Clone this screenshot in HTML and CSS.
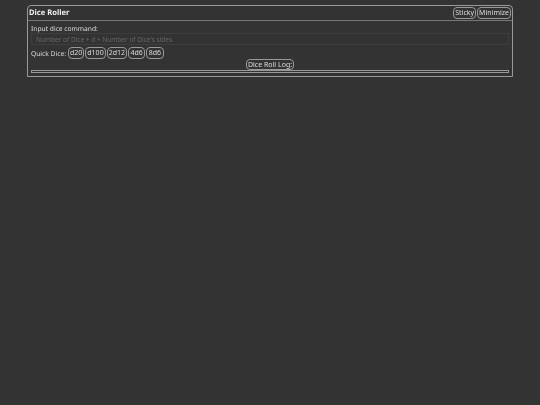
FILE: index.html
```html
<!DOCTYPE html>
<html lang="en">
<head>
    <meta charset="UTF-8">
    <meta name="viewport" content="width=device-width, initial-scale=1.0">
    <title>Dice Roller</title>
    <link rel="stylesheet" href="styles.css">
</head>
<body>
    <div class="panel">
        <div class="panel-head">
            <span class="panel-title">Dice Roller</span>
            <div class="head-btns">
                <button type="button" class="btn">Sticky</button>
                <button type="button" class="btn">Minimize</button>
            </div>
        </div>
        <div class="panel-body">
            <label class="cmd-label" for="cmd">Input dice command:</label>
            <input type="text" class="cmd-input" id="cmd" placeholder="Number of Dice + d + Number of Dice's sides">
            <div class="quick">
                <span>Quick Dice:</span>
                <button type="button" class="btn">d20</button>
                <button type="button" class="btn">d100</button>
                <button type="button" class="btn">2d12</button>
                <button type="button" class="btn btn-wide">4d6</button>
                <button type="button" class="btn btn-wide">8d6</button>
            </div>
            <div class="log-row">
                <button type="button" class="btn btn-log">Dice Roll Log:</button>
            </div>
            <div class="log"></div>
        </div>
    </div>
</body>
</html>
```

FILE: styles.css
```css
body {
    margin: 0;
    background-color: #333;
    color: #ddd;
    font-family: "Noto Sans", sans-serif;
    font-size: 6.7px;
    text-rendering: geometricPrecision;
}
.panel {
    width: 484px;
    margin: 5px 0 0 27px;
    border: 1px solid #999;
    border-top-left-radius: 4px;
    border-top-right-radius: 4px;
    will-change: opacity;
}
.panel-head {
    display: flex;
    justify-content: space-between;
    align-items: center;
    height: 14px;
    padding: 0 1px;
    border-bottom: 1px solid #777;
}
.panel-title {
    font-size: 7.6px;
    font-weight: bold;
    color: #eee;
}
.head-btns {
    display: flex;
    gap: 1px;
}
.btn {
    height: 12px;
    padding: 0 1px;
    background-color: #333;
    border: 1px solid #999;
    border-radius: 4px;
    color: #ddd;
    font-family: inherit;
    font-size: 7px;
    line-height: 10px;
}
.btn-wide {
    padding: 0 1.5px;
}
.btn-log {
    height: 11px;
}
.panel-body {
    padding: 2px 3px 3px;
}
.cmd-label {
    display: block;
    height: 9px;
    padding-top: 1px;
    line-height: 10px;
}
.cmd-input {
    display: block;
    box-sizing: border-box;
    width: 100%;
    height: 12px;
    padding: 0 4px;
    background-color: #333;
    border: 1px solid #3e3e3e;
    color: #ddd;
    font-family: inherit;
    font-size: 6.5px;
}
.cmd-input::placeholder {
    color: #666;
}
.quick {
    display: flex;
    align-items: center;
    gap: 1px;
    height: 12px;
    margin-top: 2px;
}
.quick span {
    margin-right: 1px;
}
.log-row {
    display: flex;
    justify-content: center;
}
.log {
    height: 1px;
    border: 1px solid #999;
}
```
